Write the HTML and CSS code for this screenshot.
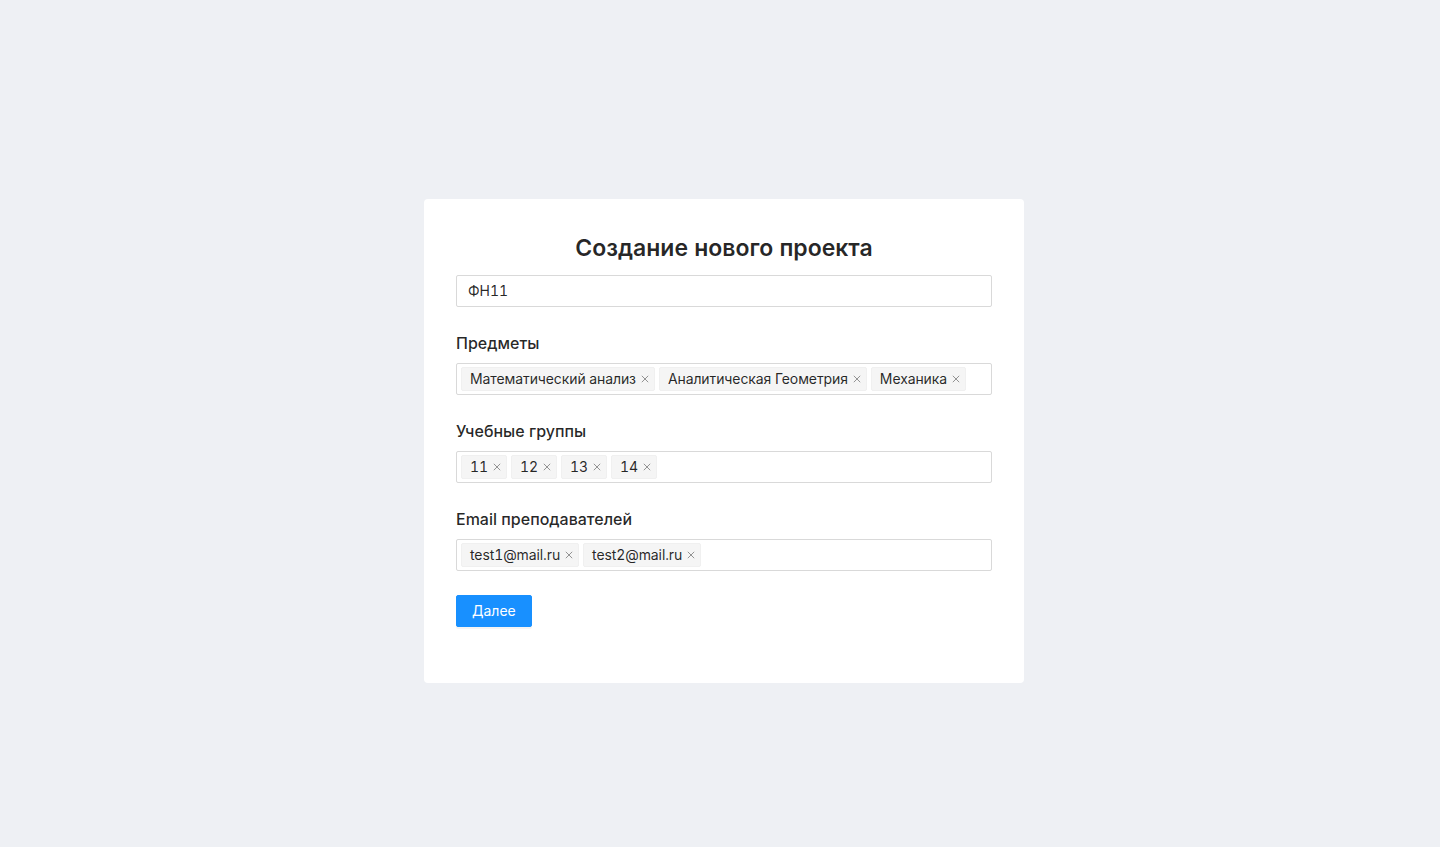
FILE: index.html
```html
<!DOCTYPE html>
<html lang="ru">
<head>
<meta charset="utf-8">
<title>Создание нового проекта</title>
<link rel="stylesheet" href="styles.css">
</head>
<body>
<div class="page">
  <div class="card">
    <h1 class="title">Создание нового проекта</h1>
    <form class="form">
      <div class="item">
        <div class="input">ФН11</div>
      </div>
      <div class="item">
        <div class="label">Предметы</div>
        <div class="select">
          <span class="tag">Математический анализ<svg class="x" viewBox="0 0 10 10"><path d="M1.8 1.8l6.4 6.4M8.2 1.8l-6.4 6.4"/></svg></span>
          <span class="tag">Аналитическая Геометрия<svg class="x" viewBox="0 0 10 10"><path d="M1.8 1.8l6.4 6.4M8.2 1.8l-6.4 6.4"/></svg></span>
          <span class="tag">Механика<svg class="x" viewBox="0 0 10 10"><path d="M1.8 1.8l6.4 6.4M8.2 1.8l-6.4 6.4"/></svg></span>
        </div>
      </div>
      <div class="item">
        <div class="label">Учебные группы</div>
        <div class="select">
          <span class="tag">11<svg class="x" viewBox="0 0 10 10"><path d="M1.8 1.8l6.4 6.4M8.2 1.8l-6.4 6.4"/></svg></span>
          <span class="tag">12<svg class="x" viewBox="0 0 10 10"><path d="M1.8 1.8l6.4 6.4M8.2 1.8l-6.4 6.4"/></svg></span>
          <span class="tag">13<svg class="x" viewBox="0 0 10 10"><path d="M1.8 1.8l6.4 6.4M8.2 1.8l-6.4 6.4"/></svg></span>
          <span class="tag">14<svg class="x" viewBox="0 0 10 10"><path d="M1.8 1.8l6.4 6.4M8.2 1.8l-6.4 6.4"/></svg></span>
        </div>
      </div>
      <div class="item">
        <div class="label">Email преподавателей</div>
        <div class="select">
          <span class="tag">test1@mail.ru<svg class="x" viewBox="0 0 10 10"><path d="M1.8 1.8l6.4 6.4M8.2 1.8l-6.4 6.4"/></svg></span>
          <span class="tag">test2@mail.ru<svg class="x" viewBox="0 0 10 10"><path d="M1.8 1.8l6.4 6.4M8.2 1.8l-6.4 6.4"/></svg></span>
        </div>
      </div>
      <div class="item">
        <button type="button" class="btn">Далее</button>
      </div>
    </form>
  </div>
</div>
</body>
</html>
```
FILE: styles.css
```css
* { box-sizing: border-box; }
html, body { margin: 0; padding: 0; }
body {
  background: #eef0f4;
  font-family: Inter, "Noto Sans", "Liberation Sans", sans-serif;
  font-variant-numeric: tabular-nums;
  font-feature-settings: "tnum";
  color: rgba(0,0,0,0.85);
  font-size: 14px;
}
.page {
  min-height: 847px;
  display: flex;
  justify-content: center;
  align-items: flex-start;
  padding: 199px 0 0 8px;
}
.card {
  width: 600px;
  background: #fff;
  border-radius: 4px;
  padding: 32px 32px 32px;
}
.title {
  margin: 0 0 10px;
  font-size: 23px;
  line-height: 34px;
  font-weight: 600;
  text-align: center;
  color: rgba(0,0,0,0.85);
}
.form { display: flex; flex-direction: column; }
.item { margin-bottom: 24px; }
.label {
  font-size: 16px;
  font-weight: 500;
  line-height: 24px;
  padding-bottom: 8px;
}
.input {
  height: 32px;
  border: 1px solid #d9d9d9;
  border-radius: 2px;
  padding: 0 11px;
  line-height: 30px;
  font-size: 14px;
}
.select {
  height: 32px;
  border: 1px solid #d9d9d9;
  border-radius: 2px;
  padding: 1px 4px;
  display: flex;
  align-items: center;
}
.tag {
  display: inline-flex;
  align-items: center;
  height: 24px;
  margin: 2px 4px 2px 0;
  padding: 0 4px 0 8px;
  background: #f5f5f5;
  border: 1px solid #f0f0f0;
  border-radius: 2px;
  font-size: 14px;
  line-height: 22px;
  letter-spacing: -0.1px;
  white-space: nowrap;
}
.x {
  width: 10px;
  height: 10px;
  margin-left: 4px;
  stroke: rgba(0,0,0,0.4);
  stroke-width: 1;
  fill: none;
}
.btn {
  height: 32px;
  padding: 4px 15px;
  border: 1px solid #1890ff;
  background: #1890ff;
  color: #fff;
  border-radius: 2px;
  font-family: inherit;
  font-size: 14px;
  line-height: 22px;
  box-shadow: 0 2px 0 rgba(0,0,0,0.045);
  cursor: pointer;
}
```
